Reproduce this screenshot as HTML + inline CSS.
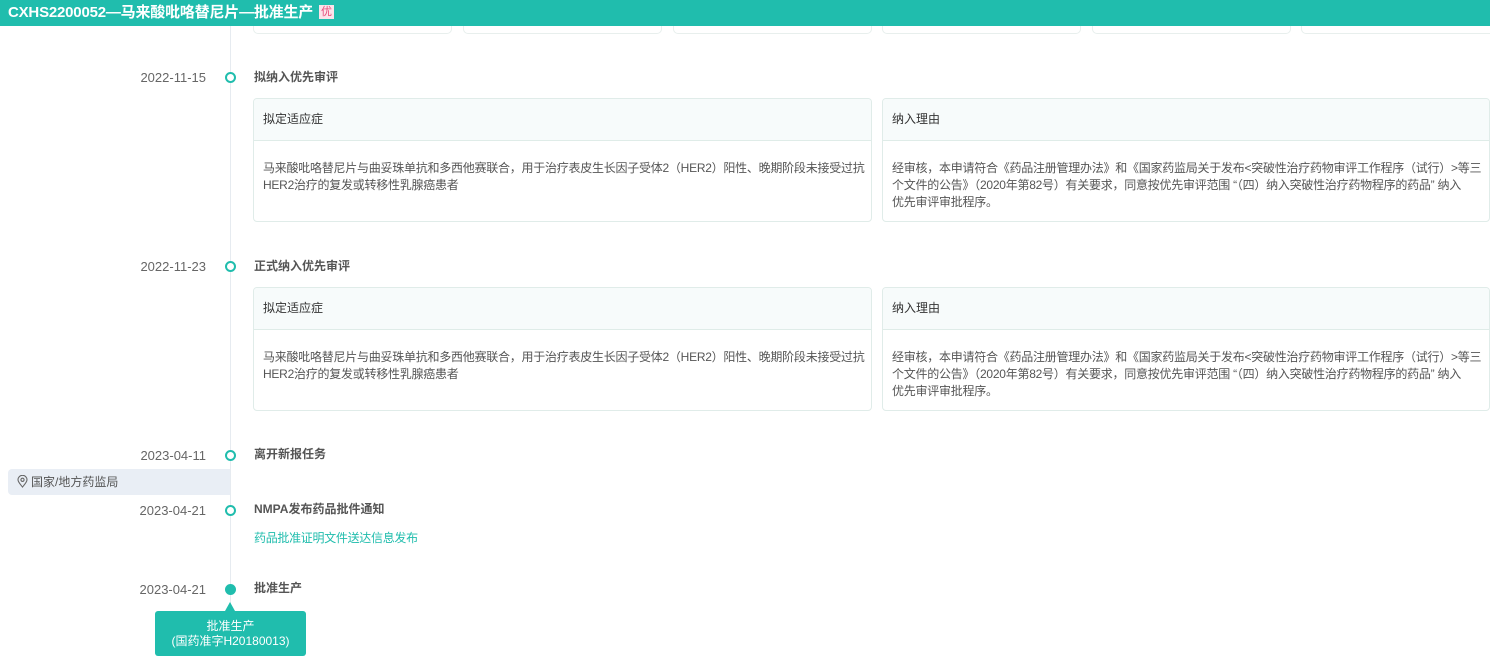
<!DOCTYPE html>
<html><head><meta charset="utf-8"><style>
*{margin:0;padding:0;box-sizing:border-box}
body{width:1490px;height:669px;overflow:hidden;background:#fff;font-family:"Liberation Sans","Noto Sans CJK SC",sans-serif;font-size:12px;color:#555;position:relative}
.hdr{position:absolute;left:0;top:0;width:1490px;height:26px;background:#20bdad;color:#fff;font-weight:bold;font-size:15px;line-height:25px;padding-left:8px;letter-spacing:-0.2px}
.tag{display:inline-block;background:#fbe3ea;color:#e64b7a;font-size:11px;font-weight:normal;line-height:14px;padding:0 2px;vertical-align:2px;margin-left:2px}
.a{position:absolute}
.line{left:230px;top:26px;width:1px;height:600px;background:#e6ebf0}
.date{width:80px;left:126px;text-align:right;color:#666;font-size:13px;line-height:14px}
.dot{left:225px;width:11px;height:11px;border:2px solid #20bdad;border-radius:50%;background:#fff}
.title{left:254px;font-weight:bold;color:#555;line-height:14px}
.card{border:1px solid #e0ece9;border-radius:4px;background:#fff;overflow:hidden}
.ch{height:42px;background:#f7fbfb;border-bottom:1px solid #dfece8;line-height:41px;padding-left:9px;color:#333}
.cb{padding:19px 6px 0 9px;line-height:17px;color:#555;letter-spacing:-0.25px}
.r .cb{padding-right:4px}
.top{top:20px;height:14px;border:1px solid #e8efed;border-top:none;border-radius:0 0 5px 5px;width:199px}
</style></head><body>
<div class="a line"></div>
<div class="a top" style="left:253px"></div>
<div class="a top" style="left:463px"></div>
<div class="a top" style="left:673px"></div>
<div class="a top" style="left:882px"></div>
<div class="a top" style="left:1092px"></div>
<div class="a top" style="left:1301px;width:200px"></div>
<div class="hdr">CXHS2200052—马来酸吡咯替尼片—批准生产 <span class="tag">优</span></div>

<div class="a date" style="top:71px">2022-11-15</div>
<div class="a dot" style="top:72px"></div>
<div class="a title" style="top:70px">拟纳入优先审评</div>
<div class="a card" style="left:253px;top:98px;width:619px;height:124px"><div class="ch">拟定适应症</div><div class="cb">马来酸吡咯替尼片与曲妥珠单抗和多西他赛联合，用于治疗表皮生长因子受体2（HER2）阳性、晚期阶段未接受过抗HER2治疗的复发或转移性乳腺癌患者</div></div>
<div class="a card r" style="left:882px;top:98px;width:608px;height:124px"><div class="ch">纳入理由</div><div class="cb">经审核，本申请符合《药品注册管理办法》和《国家药监局关于发布&lt;突破性治疗药物审评工作程序（试行）&gt;等三个文件的公告》（2020年第82号）有关要求，同意按优先审评范围 “（四）纳入突破性治疗药物程序的药品” 纳入<br>优先审评审批程序。</div></div>

<div class="a date" style="top:260px">2022-11-23</div>
<div class="a dot" style="top:261px"></div>
<div class="a title" style="top:259px">正式纳入优先审评</div>
<div class="a card" style="left:253px;top:287px;width:619px;height:124px"><div class="ch">拟定适应症</div><div class="cb">马来酸吡咯替尼片与曲妥珠单抗和多西他赛联合，用于治疗表皮生长因子受体2（HER2）阳性、晚期阶段未接受过抗HER2治疗的复发或转移性乳腺癌患者</div></div>
<div class="a card r" style="left:882px;top:287px;width:608px;height:124px"><div class="ch">纳入理由</div><div class="cb">经审核，本申请符合《药品注册管理办法》和《国家药监局关于发布&lt;突破性治疗药物审评工作程序（试行）&gt;等三个文件的公告》（2020年第82号）有关要求，同意按优先审评范围 “（四）纳入突破性治疗药物程序的药品” 纳入<br>优先审评审批程序。</div></div>

<div class="a date" style="top:449px">2023-04-11</div>
<div class="a dot" style="top:450px"></div>
<div class="a title" style="top:447px">离开新报任务</div>

<div class="a" style="left:8px;top:469px;width:222px;height:26px;background:#e9eef5;border-radius:4px 0 0 4px;line-height:26px;padding-left:9px;color:#555"><svg width="11" height="13" viewBox="0 0 11 13" style="vertical-align:-2px;margin-right:3px"><path d="M5.5 12C3 9 1 7 1 4.8A4.5 4.5 0 0 1 10 4.8C10 7 8 9 5.5 12Z" fill="none" stroke="#666" stroke-width="1.1"/><circle cx="5.5" cy="4.8" r="1.6" fill="none" stroke="#666" stroke-width="1.1"/></svg>国家/地方药监局</div>

<div class="a date" style="top:504px">2023-04-21</div>
<div class="a dot" style="top:505px"></div>
<div class="a title" style="top:502px">NMPA发布药品批件通知</div>
<div class="a" style="left:254px;top:531px;color:#20bdad;line-height:14px;letter-spacing:-0.3px">药品批准证明文件送达信息发布</div>

<div class="a date" style="top:583px">2023-04-21</div>
<div class="a dot" style="top:584px;background:#20bdad"></div>
<div class="a title" style="top:581px">批准生产</div>
<div class="a" style="left:225px;top:602px;width:0;height:0;border-left:5px solid transparent;border-right:5px solid transparent;border-bottom:9px solid #20bdad"></div>
<div class="a" style="left:155px;top:611px;width:151px;height:45px;background:#20bdad;border-radius:3px;color:#fff;text-align:center;line-height:15px;padding-top:8px">批准生产<br>(国药准字H20180013)</div>
</body></html>
